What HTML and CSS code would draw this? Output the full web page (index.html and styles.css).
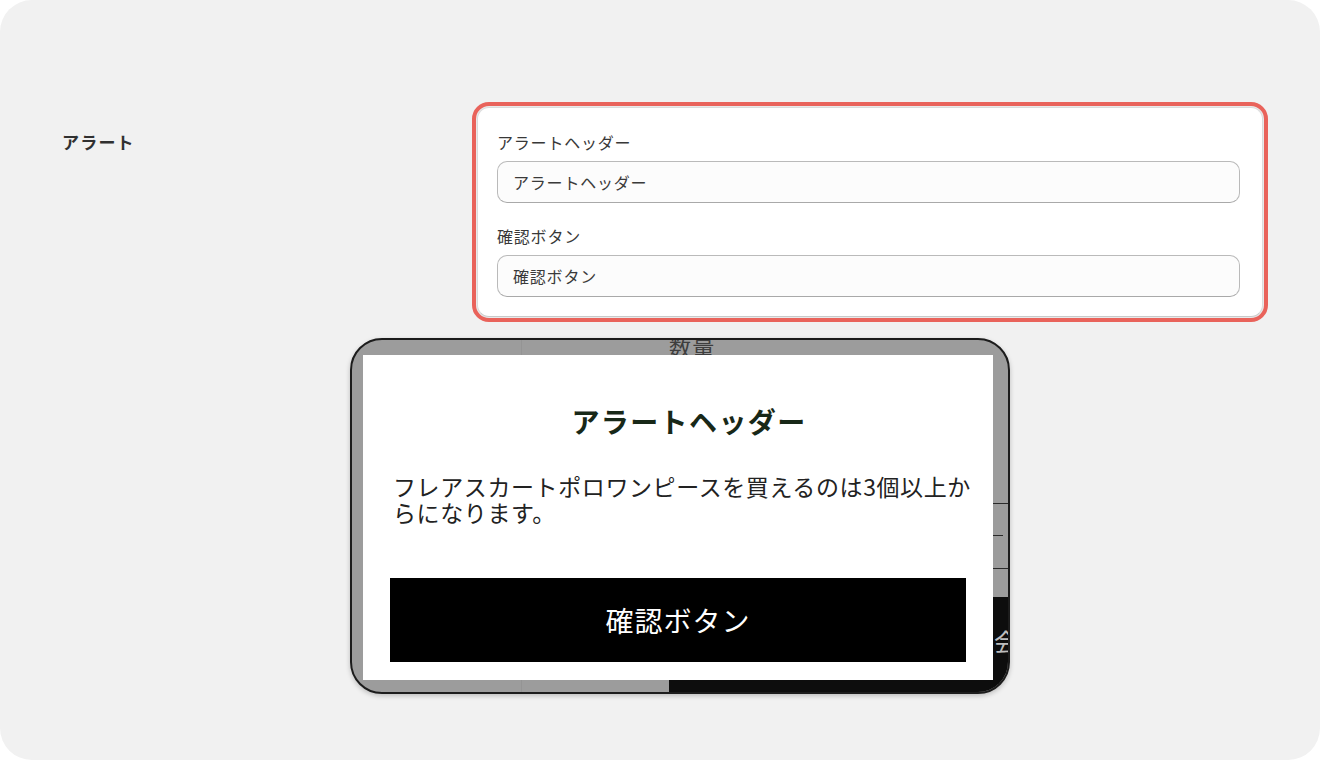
FILE: index.html
```html
<!DOCTYPE html>
<html lang="ja">
<head>
<meta charset="utf-8">
<title>アラート設定</title>
<link rel="stylesheet" href="styles.css">
</head>
<body>
<div class="panel">
  <section class="setting-row">
    <div class="setting-label">アラート</div>
    <div class="highlight">
      <div class="card">
        <label class="field">
          <span class="field-label">アラートヘッダー</span>
          <input class="field-input" type="text" value="アラートヘッダー">
        </label>
        <label class="field">
          <span class="field-label">確認ボタン</span>
          <input class="field-input" type="text" value="確認ボタン">
        </label>
      </div>
    </div>
  </section>

  <section class="preview-row">
    <div class="phone">
      <div class="app-divider"></div>
      <div class="app-qty">数量</div>
      <div class="app-line app-line-1"></div>
      <div class="app-line app-line-short"></div>
      <div class="app-line app-line-2"></div>
      <div class="app-bar"><span class="app-bar-text">会</span></div>

      <div class="modal">
        <h2 class="modal-title">アラートヘッダー</h2>
        <p class="modal-body">フレアスカートポロワンピースを買えるのは3個以上からになります。</p>
        <button class="modal-button" type="button">確認ボタン</button>
      </div>
    </div>
  </section>
</div>
</body>
</html>
```

FILE: styles.css
```css
* { box-sizing: border-box; }

html, body {
  margin: 0;
  padding: 0;
  background: #ffffff;
}

body {
  font-family: "Noto Sans CJK JP", "Noto Sans", sans-serif;
  width: 1320px;
  height: 760px;
  overflow: hidden;
}

.panel {
  width: 1320px;
  height: 760px;
  background: #f1f1f1;
  border-radius: 32px;
  padding-top: 102px;
  overflow: hidden;
}

/* ---------- settings row ---------- */
.setting-row {
  display: flex;
  align-items: flex-start;
  padding-left: 62px;
}

.setting-label {
  width: 410px;
  margin-top: 30px;
  font-size: 17px;
  font-weight: 700;
  line-height: 20px;
  letter-spacing: 1.2px;
  color: #303030;
}

.highlight {
  width: 796px;
  border: 4px solid #e9635b;
  border-radius: 17px;
  padding: 1px;
  background: #e9e9ea;
}

.card {
  display: flex;
  flex-direction: column;
  background: #ffffff;
  border: 1px solid #dcdcdc;
  border-bottom-color: #c9c9c9;
  border-radius: 12px;
  padding: 24px 22px 19px 19px;
}

.field {
  display: flex;
  flex-direction: column;
}

.field + .field {
  margin-top: 23.5px;
}

.field-label {
  font-size: 16px;
  line-height: 20px;
  letter-spacing: 0.8px;
  color: #383838;
  margin-bottom: 8.5px;
}

.field-input {
  width: 100%;
  height: 42px;
  border: 1px solid #bababa;
  border-bottom-color: #a9a9a9;
  border-radius: 10px;
  background: #fcfcfc;
  padding: 0 15px;
  font-family: inherit;
  font-size: 16px;
  letter-spacing: 0.8px;
  color: #3a3a3a;
  outline: none;
}

/* ---------- preview ---------- */
.preview-row {
  display: flex;
  margin-top: 16px;
  padding-left: 350px;
}

.phone {
  position: relative;
  width: 660px;
  height: 356px;
  border: 2px solid #1c1c1c;
  border-radius: 32px;
  background: #9c9c9c;
  overflow: hidden;
  box-shadow: 0 2px 5px rgba(0, 0, 0, 0.22);
}

.app-divider {
  position: absolute;
  left: 169px;
  top: 0;
  bottom: 0;
  width: 1px;
  background: rgba(0, 0, 0, 0.05);
}

.app-qty {
  position: absolute;
  left: 317px;
  top: -6px;
  font-size: 22px;
  line-height: 24px;
  letter-spacing: 1.2px;
  color: #3e3e3e;
}

.app-line {
  position: absolute;
  height: 1px;
  background: #2a2a2a;
}

.app-line-1 { left: 317px; right: 0; top: 163px; }
.app-line-2 { left: 317px; right: 0; top: 228px; }
.app-line-short { left: 641px; width: 10px; top: 195px; }

.app-bar {
  position: absolute;
  left: 317px;
  right: 0;
  top: 257px;
  bottom: 0;
  background: #0d0d0d;
}

.app-bar-text {
  position: absolute;
  left: 325px;
  top: 32px;
  font-size: 24px;
  line-height: 24px;
  color: #bdbdbd;
}

.modal {
  position: absolute;
  left: 11px;
  top: 15px;
  width: 630px;
  height: 325px;
  background: #ffffff;
  padding: 48px 8px 0 30px;
  display: flex;
  flex-direction: column;
}

.modal-title {
  margin: 0;
  font-size: 28px;
  font-weight: 700;
  line-height: 36px;
  letter-spacing: 1.4px;
  text-align: center;
  color: #182818;
}

.modal-body {
  margin: 34px 0 0 0;
  font-size: 23px;
  line-height: 26px;
  letter-spacing: 0.6px;
  color: #222222;
}

.modal-button {
  margin-top: 53px;
  margin-left: -3px;
  width: 576px;
  height: 84px;
  border: none;
  background: #000000;
  color: #ffffff;
  font-family: inherit;
  font-size: 28px;
  letter-spacing: 1px;
  display: flex;
  align-items: center;
  justify-content: center;
  padding: 0;
}
```
